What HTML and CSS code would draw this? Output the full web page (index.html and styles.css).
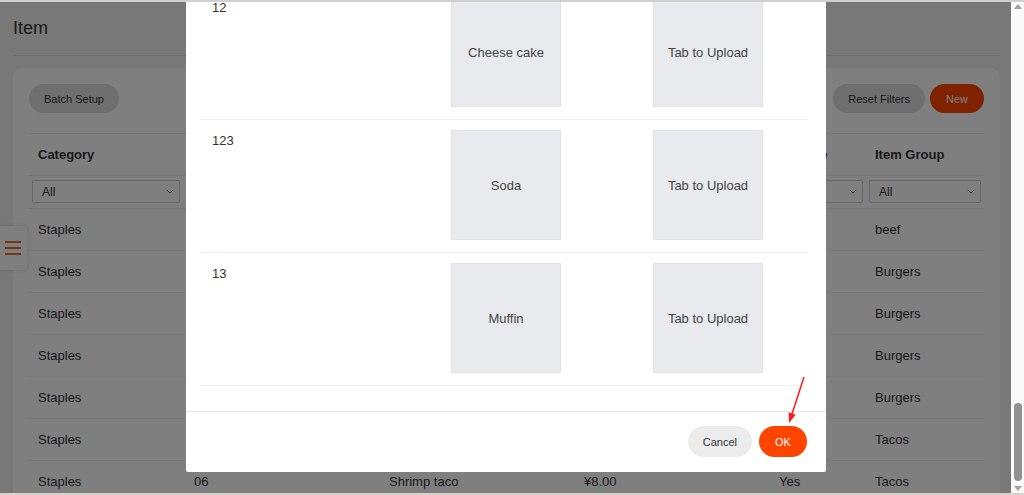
FILE: index.html
```html
<!DOCTYPE html>
<html lang="en">
<head>
<meta charset="utf-8">
<title>Item</title>
<link rel="stylesheet" href="styles.css">
</head>
<body>
<div class="app">
  <main class="page">
    <h1 class="title">Item</h1>
    <section class="card">
      <div class="toolbar">
        <button class="btn btn-gray">Batch Setup</button>
        <div class="spacer"></div>
        <button class="btn btn-gray">Reset Filters</button>
        <button class="btn btn-primary btn-new">New</button>
      </div>
      <table class="grid">
        <colgroup>
          <col class="c1"><col class="c2"><col class="c3"><col class="c4"><col class="c5"><col class="c6">
        </colgroup>
        <thead>
          <tr class="head">
            <th>Category</th><th>Code</th><th>Name</th><th>Price</th><th>On Sale</th><th>Item Group</th>
          </tr>
          <tr class="filters">
            <td class="f1"><div class="sel">All<svg viewBox="0 0 10 6" class="chev"><path d="M1 1l4 4 4-4" fill="none" stroke="#555" stroke-width="1.2"/></svg></div></td>
            <td><div class="sel">All<svg viewBox="0 0 10 6" class="chev"><path d="M1 1l4 4 4-4" fill="none" stroke="#555" stroke-width="1.2"/></svg></div></td>
            <td><div class="sel">All<svg viewBox="0 0 10 6" class="chev"><path d="M1 1l4 4 4-4" fill="none" stroke="#555" stroke-width="1.2"/></svg></div></td>
            <td><div class="sel">All<svg viewBox="0 0 10 6" class="chev"><path d="M1 1l4 4 4-4" fill="none" stroke="#555" stroke-width="1.2"/></svg></div></td>
            <td><div class="sel">All<svg viewBox="0 0 10 6" class="chev"><path d="M1 1l4 4 4-4" fill="none" stroke="#555" stroke-width="1.2"/></svg></div></td>
            <td><div class="sel">All<svg viewBox="0 0 10 6" class="chev"><path d="M1 1l4 4 4-4" fill="none" stroke="#555" stroke-width="1.2"/></svg></div></td>
          </tr>
        </thead>
        <tbody>
          <tr><td>Staples</td><td></td><td></td><td></td><td></td><td>beef</td></tr>
          <tr><td>Staples</td><td></td><td></td><td></td><td></td><td>Burgers</td></tr>
          <tr><td>Staples</td><td></td><td></td><td></td><td></td><td>Burgers</td></tr>
          <tr><td>Staples</td><td></td><td></td><td></td><td></td><td>Burgers</td></tr>
          <tr><td>Staples</td><td></td><td></td><td></td><td></td><td>Burgers</td></tr>
          <tr><td>Staples</td><td></td><td></td><td></td><td></td><td>Tacos</td></tr>
          <tr><td>Staples</td><td>06</td><td>Shrimp taco</td><td>¥8.00</td><td>Yes</td><td>Tacos</td></tr>
        </tbody>
      </table>
    </section>

    <div class="menu-tab">
      <span class="bar"></span><span class="bar"></span><span class="bar"></span>
    </div>

    <div class="mask"></div>

    <div class="modal">
      <div class="modal-body">
        <div class="row">
          <div class="num">12</div>
          <div class="box">Cheese cake</div>
          <div class="box">Tab to Upload</div>
        </div>
        <div class="row">
          <div class="num">123</div>
          <div class="box">Soda</div>
          <div class="box">Tab to Upload</div>
        </div>
        <div class="row">
          <div class="num">13</div>
          <div class="box">Muffin</div>
          <div class="box">Tab to Upload</div>
        </div>
      </div>
      <div class="modal-footer">
        <button class="btn btn-light">Cancel</button>
        <button class="btn btn-primary btn-ok">OK</button>
      </div>
    </div>

    <svg class="arrow" viewBox="0 0 30 60" width="30" height="60">
      <line x1="24" y1="7" x2="12" y2="44" stroke="#ff1a1a" stroke-width="1.5"/>
      <polygon points="9,53 8.6,42.3 15.6,44.7" fill="#ff1a1a"/>
    </svg>
  </main>

  <div class="scrollbar">
    <svg class="sb-arrow" viewBox="0 0 8 5" width="8" height="5"><polygon points="0,5 4,0 8,5" fill="#a3a3a3"/></svg>
    <div class="sb-track"><div class="sb-thumb"></div></div>
    <svg class="sb-arrow" viewBox="0 0 8 5" width="8" height="5"><polygon points="0,0 8,0 4,5" fill="#a3a3a3"/></svg>
  </div>
</div>
<div class="edge edge-top"></div>
<div class="edge edge-bottom"></div>
</body>
</html>
```

FILE: styles.css
```css
* { box-sizing: border-box; }

html, body {
  margin: 0;
  padding: 0;
  height: 100%;
  overflow: hidden;
}

body {
  font-family: "Liberation Sans", Arial, sans-serif;
  color: #333;
  background: #f2f2f2;
}

.app {
  display: flex;
  height: 495px;
  width: 1024px;
}

.page {
  position: relative;
  flex: 1;
  overflow: hidden;
  padding: 0 11px 0 13px;
  background: #f1f1f1;
}

.title {
  margin: 0;
  height: 56px;
  padding-top: 17px;
  font-size: 18px;
  font-weight: normal;
  line-height: 22px;
  color: #333;
  border-bottom: 1px solid #d9d9d9;
}

.card {
  margin-top: 12px;
  background: #fff;
  border-radius: 10px;
  padding: 16px 16px 0 16px;
  height: 600px;
}

.toolbar {
  display: flex;
  align-items: center;
  gap: 5px;
}

.spacer { flex: 1; }

.btn {
  font-family: "Liberation Sans", Arial, sans-serif;
  font-size: 11px;
  border: none;
  border-radius: 16px;
  height: 29px;
  padding: 0 15px;
  color: #333;
  cursor: pointer;
}

.btn-gray { background: #dedede; }
.btn-light { background: #ececec; height: 31px; min-width: 64px; }
.btn-primary { background: #ff4400; color: #fff; }
.btn-new { min-width: 54px; }
.btn-ok { height: 31px; min-width: 48px; }

.grid {
  margin-top: 20px;
  width: 955px;
  border-collapse: collapse;
  table-layout: fixed;
  font-size: 13px;
}

.c1 { width: 156px; }
.c2 { width: 195px; }
.c3 { width: 195px; }
.c4 { width: 195px; }
.c5 { width: 96px; }
.c6 { width: 118px; }

.head th {
  text-align: left;
  font-weight: bold;
  height: 42px;
  padding: 0 9px;
  border-top: 1px solid #ebebeb;
  border-bottom: 1px solid #ebebeb;
  white-space: nowrap;
}

.filters td {
  height: 33px;
  padding: 4px 3px 5px 3px;
  border-bottom: 1px solid #ebebeb;
}

.filters td.f1 { padding-right: 5px; }

.sel {
  display: flex;
  align-items: center;
  justify-content: space-between;
  height: 23px;
  border: 1px solid #cfcfcf;
  border-radius: 2px;
  background: #fff;
  padding: 0 5px 0 9px;
  font-size: 12px;
  color: #333;
}

.chev { width: 8px; height: 5px; }

tbody td {
  height: 42px;
  padding: 0 9px;
  border-bottom: 1px solid #f0f0f0;
  white-space: nowrap;
}

.menu-tab {
  position: absolute;
  left: 0;
  top: 226px;
  width: 27px;
  height: 44px;
  background: #fff;
  border-radius: 0 3px 3px 0;
  box-shadow: 0 0 4px rgba(0,0,0,0.15);
  display: flex;
  flex-direction: column;
  justify-content: center;
  gap: 4.5px;
  padding-left: 5px;
}

.bar {
  display: block;
  width: 16px;
  height: 1.5px;
  background: #f0642c;
}

.mask {
  position: absolute;
  inset: 0;
  background: rgba(0,0,0,0.5);
}

.modal {
  position: absolute;
  left: 186px;
  top: -13px;
  width: 640px;
  background: #fff;
  border-radius: 0 0 2px 2px;
}

.modal-body {
  padding: 0 18px 25px 14px;
}

.row {
  display: grid;
  grid-template-columns: 251px 202px 1fr;
  align-items: start;
  padding: 10px 0 12px 0;
  border-bottom: 1px solid #f2f2f2;
}

.num {
  padding-left: 12px;
  font-size: 13px;
  line-height: 21px;
  color: #333;
}

.box {
  width: 110px;
  height: 110px;
  background: #e8eaed;
  border: 1px solid #e0e2e5;
  display: flex;
  align-items: center;
  justify-content: center;
  font-size: 13px;
  color: #444;
}

.modal-footer {
  border-top: 1px solid #e6e6e6;
  display: flex;
  justify-content: flex-end;
  gap: 7px;
  padding: 14px 19px 15px 19px;
}

.arrow {
  position: absolute;
  left: 780px;
  top: 370px;
}

.scrollbar {
  width: 13px;
  background: #fafafa;
  display: flex;
  flex-direction: column;
  align-items: center;
  padding: 4px 0 4px 0;
}

.sb-arrow { flex: none; }

.sb-track {
  flex: 1;
  width: 100%;
  display: flex;
  flex-direction: column;
  justify-content: flex-end;
  align-items: center;
  padding: 0 0 5px 1px;
}

.sb-thumb {
  width: 8px;
  height: 78px;
  background: #929292;
  border-radius: 4px;
}

.edge {
  position: absolute;
  left: 0;
  width: 1024px;
  pointer-events: none;
}

.edge-top {
  top: 0;
  height: 2px;
  background: #d0d0d0;
}

.edge-bottom {
  bottom: 0;
  height: 2px;
  background: #d6d2cd;
}
```
